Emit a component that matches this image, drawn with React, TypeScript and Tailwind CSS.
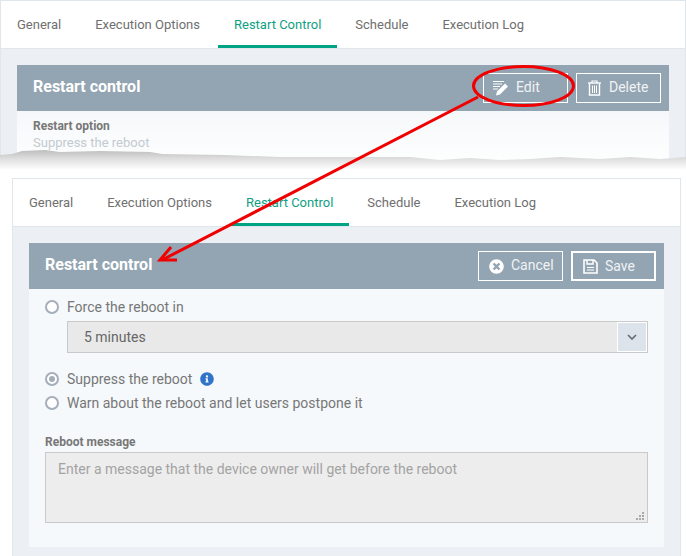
import React from 'react';
import { FaInfoCircle, FaTimesCircle } from 'react-icons/fa';

const tabNames = ['General', 'Execution Options', 'Restart Control', 'Schedule', 'Execution Log'];

// Tab strip shared by the two cropped panels
const Tabs = () => (
  <div className="flex h-[48px] shrink-0 bg-white border-b border-[#dfe6ec]">
    {tabNames.map((name) => {
      const active = name === 'Restart Control';
      return (
        <div
          key={name}
          className={`h-[47px] pt-[15px] text-[13px] leading-[18px] border-b-[3px] first:pl-[16px] ${
            active ? 'px-[16px] mx-[1px] text-[#0f9f83] border-[#00a383]' : 'px-[17px] text-[#6f6f6f] border-transparent'
          }`}
        >
          {name}
        </div>
      );
    })}
  </div>
);

const EditIcon = () => (
  <svg width="16" height="16" viewBox="0 0 16 16" fill="none">
    <path d="M0 1.5H11M0 4H9M0 6.5H7M0 9H5" stroke="white" strokeWidth="1" />
    <path d="M3 15.5L4 11.5L12 3.5L15 6.5L7 14.5Z" fill="white" />
  </svg>
);

const TrashIcon = () => (
  <svg width="13" height="16" viewBox="0 0 13 16" fill="none">
    <path d="M0 3H13" stroke="white" strokeWidth="1.4" />
    <path d="M4 3V1H9V3" stroke="white" strokeWidth="1.2" />
    <path d="M1.5 3.5V15H11.5V3.5" stroke="white" strokeWidth="1.4" />
    <path d="M4.5 5.5V13M6.5 5.5V13M8.5 5.5V13" stroke="white" strokeWidth="1" />
  </svg>
);

const SaveIcon = () => (
  <svg width="15" height="15" viewBox="0 0 15 15" fill="none">
    <path d="M1 1H11L14 4V14H1Z" stroke="white" strokeWidth="1.6" />
    <path d="M4 1V5H10V1" stroke="white" strokeWidth="1.4" />
    <path d="M4 8.5H11M4 11H11" stroke="white" strokeWidth="1.2" />
  </svg>
);

const HeaderButton = ({ icon, label, thick }: { icon: React.ReactNode; label: string; thick?: boolean }) => (
  <div
    className={`flex items-center w-[85px] h-[30px] border-white text-[14px] pl-[9px] gap-[7px] ${
      thick ? 'border-2' : 'border'
    }`}
  >
    <span className="flex w-[16px] justify-center">{icon}</span>
    <span className={`text-[#f0f3f5] ${thick ? '' : '-mt-[2px]'}`}>{label}</span>
  </div>
);

const Radio = ({ checked }: { checked?: boolean }) => (
  <span className="flex items-center justify-center w-[14px] h-[14px] rounded-full border-2 border-[#a4aebb] bg-white shrink-0">
    {checked && <span className="w-[6px] h-[6px] rounded-full bg-[#a4aebb]" />}
  </span>
);

export default function App() {
  return (
    <div
      className="relative w-[686px] h-[556px] overflow-hidden bg-white"
      style={{ fontFamily: 'Roboto, sans-serif' }}
    >
      {/* Upper cropped panel */}
      <div className="h-[178px] overflow-hidden">
        <div className="flex flex-col h-[160px] border-t border-x border-[#dfe6ec] bg-[#ecf0f4]">
          <Tabs />
          <div className="ml-[16px] mr-[16px] mt-[16px] grow flex flex-col">
            <div className="flex items-center justify-between h-[46px] shrink-0 bg-[#93a4b2] pl-[16px] pr-[8px]">
              <span className="text-white font-bold text-[16px] -mt-[2px]">Restart control</span>
              <div className="flex gap-[8px]">
                <HeaderButton icon={<EditIcon />} label="Edit" />
                <HeaderButton icon={<TrashIcon />} label="Delete" />
              </div>
            </div>
            <div className="grow bg-gradient-to-b from-[#f5f8fa] to-[#fdfefe] pl-[16px] pt-[7px]">
              <div className="text-[12px] leading-[16px] font-bold text-[#777777]">Restart option</div>
              <div className="text-[13px] leading-[18px] text-[#c3cad1]">Suppress the reboot</div>
            </div>
          </div>
        </div>
      </div>

      {/* Lower panel */}
      <div className="ml-[12px] w-[669px] h-[378px] flex flex-col border-t border-x border-[#dfe6ec] bg-[#ecf0f4]">
        <Tabs />
        <div className="ml-[16px] mr-[16px] mt-[16px] h-[304px] flex flex-col bg-[#f5f9fb]">
          <div className="flex items-center justify-between h-[46px] shrink-0 bg-[#93a4b2] pl-[16px] pr-[8px]">
            <span className="text-white font-bold text-[16px] -mt-[2px]">Restart control</span>
            <div className="flex gap-[8px]">
              <HeaderButton icon={<FaTimesCircle size={15} color="white" />} label="Cancel" />
              <HeaderButton icon={<SaveIcon />} label="Save" thick />
            </div>
          </div>
          <div className="flex flex-col px-[16px] text-[14px] text-[#777777]">
            <div className="flex items-center gap-[8px] h-[20px] mt-[8px]">
              <Radio />
              <span>Force the reboot in</span>
            </div>
            <div className="flex ml-[22px] mt-[4px] w-[581px] h-[32px] items-center justify-between bg-[#e9e9e9] border border-[#c9c9c9]">
              <span className="pl-[16px] text-[#666666]">5 minutes</span>
              <span className="flex items-center justify-center w-[30px] h-[30px] bg-[#dde3ea] border border-white">
                <svg width="10" height="6" viewBox="0 0 10 6" fill="none">
                  <path d="M1 1L5 5L9 1" stroke="#5f6b76" strokeWidth="1.6" />
                </svg>
              </span>
            </div>
            <div className="flex items-center gap-[8px] h-[20px] mt-[16px]">
              <Radio checked />
              <span>Suppress the reboot</span>
              <FaInfoCircle size={14} color="#2f74c9" />
            </div>
            <div className="flex items-center gap-[8px] h-[20px] mt-[4px]">
              <Radio />
              <span>Warn about the reboot and let users postpone it</span>
            </div>
            <div className="mt-[21px] text-[12px] leading-[16px] font-bold text-[#777777]">Reboot message</div>
            <div className="relative mt-[2px] w-[603px] h-[71px] bg-[#eeeded] border border-[#c9c9c9] pl-[12px] pt-[7px] text-[#a3a3a3] leading-[18px]">
              Enter a message that the device owner will get before the reboot
              <svg className="absolute right-[3px] bottom-[2px]" width="8" height="8" viewBox="0 0 8 8" fill="#a9a9a9">
                <rect x="6" y="0" width="2" height="2" />
                <rect x="3" y="3" width="2" height="2" />
                <rect x="6" y="3" width="2" height="2" />
                <rect x="0" y="6" width="2" height="2" />
                <rect x="3" y="6" width="2" height="2" />
                <rect x="6" y="6" width="2" height="2" />
              </svg>
            </div>
          </div>
        </div>
      </div>

      {/* Torn edge of the first crop, plus the red callout drawn on top */}
      <svg className="absolute left-0 top-0 pointer-events-none" width="686" height="556" viewBox="0 0 686 556" fill="none">
        <defs>
          <linearGradient id="tear" x1="0" y1="150" x2="0" y2="170" gradientUnits="userSpaceOnUse">
            <stop offset="0" stopColor="#bdbdbd" />
            <stop offset="0.4" stopColor="#dcdcdc" />
            <stop offset="1" stopColor="#ffffff" />
          </linearGradient>
        </defs>
        <path
          d="M0 155 L12 154 L22 151 L45 150 L60 152 L100 151 L150 152 L162 154 L225 155 L280 157 L343 157 L410 157 L440 160 L470 158 L500 160 L530 159 L560 157 L600 159 L630 157 L660 159 L686 157 V178 H0 Z"
          fill="url(#tear)"
        />
        <ellipse cx="523.5" cy="86" rx="50" ry="19.5" stroke="#f00000" strokeWidth="3" />
        <path d="M478 97 L162 260" stroke="#f00000" strokeWidth="3" />
        <path d="M171 247 L160 260 L177 260" stroke="#f00000" strokeWidth="3" />
      </svg>
    </div>
  );
}
